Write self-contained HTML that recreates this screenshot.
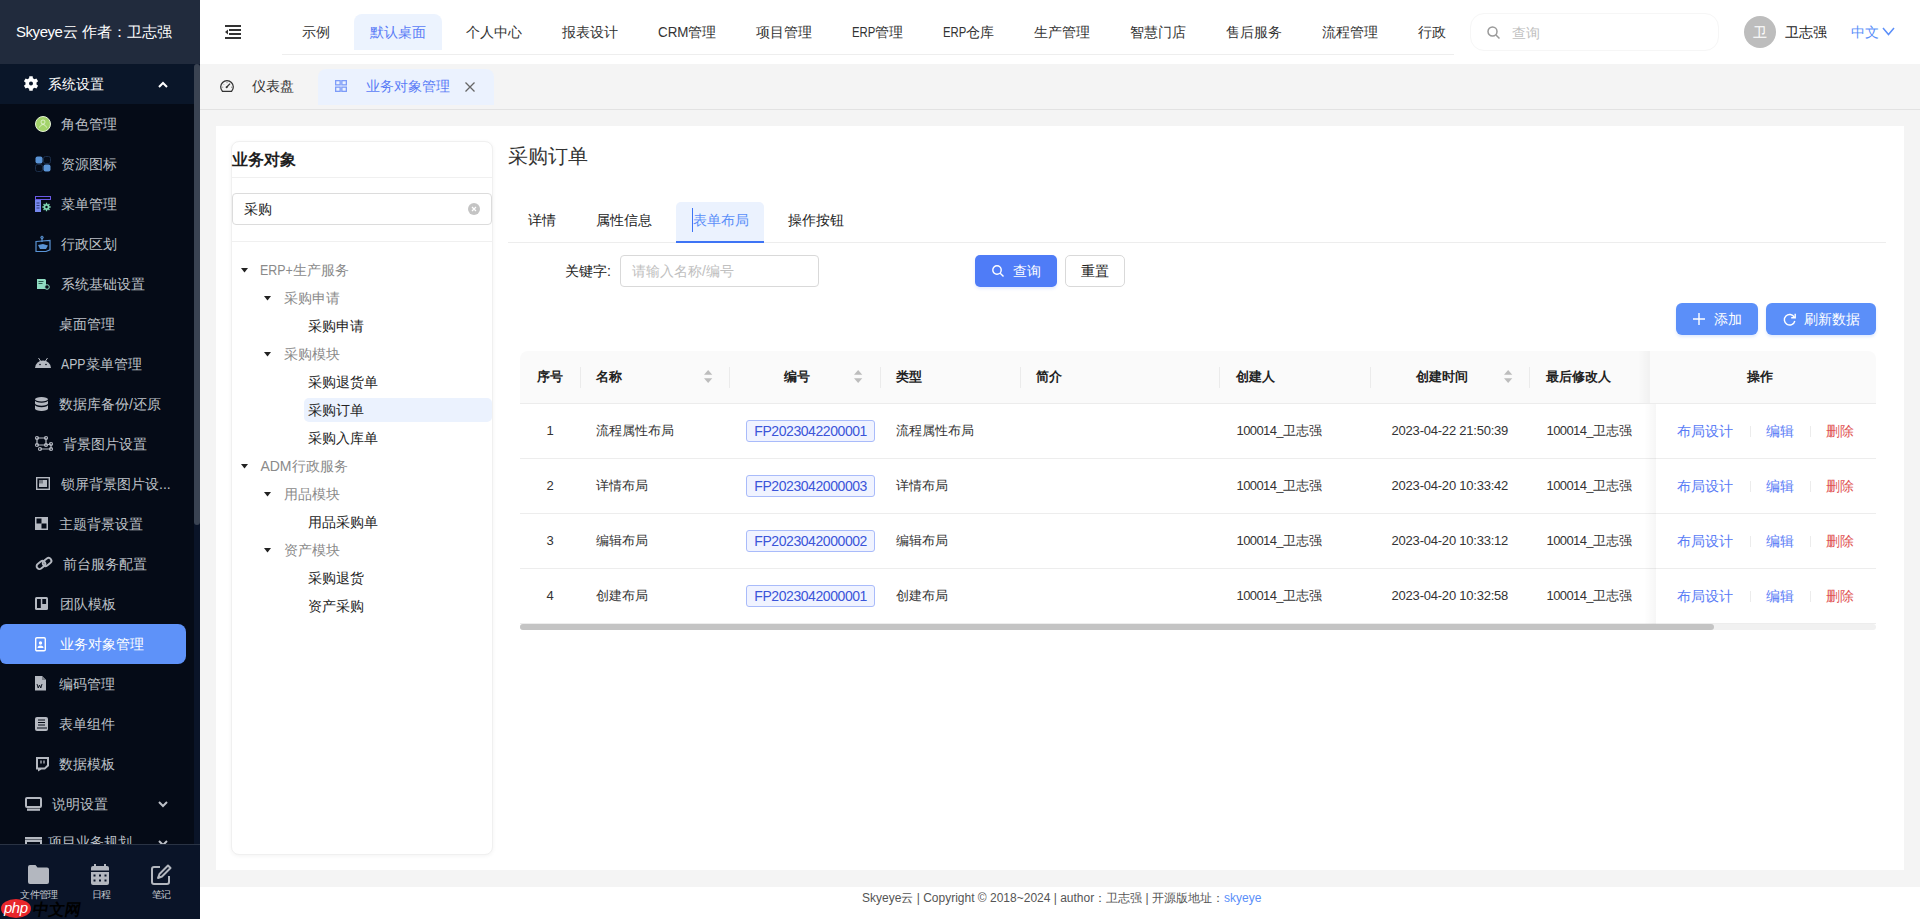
<!DOCTYPE html><html><head><meta charset="utf-8"><style>
*{box-sizing:border-box;margin:0;padding:0}
html,body{width:1920px;height:919px;overflow:hidden;background:#f4f4f4;font-family:"Liberation Sans",sans-serif;font-size:14px;color:#333}
.a{position:absolute}
.t{position:absolute;white-space:nowrap}
svg.i{position:absolute;display:block;overflow:visible}
</style></head><body>
<div class="a" style="left:0;top:0;width:200px;height:919px;background:#050b17;overflow:hidden">
<div class="a" style="left:0;top:0;width:200px;height:64px;background:#212b3d"></div>
<div class="t" style="left:16px;top:21.50px;line-height:20px;height:20px;font-size:15px;color:#fff;"><span style="letter-spacing:-.45px">Skyeye</span>云 作者：卫志强</div>
<div class="a" style="left:0;top:64px;width:200px;height:40px;background:#0a1629"></div>
<svg class="i" style="left:0;top:0" width="60" height="100" viewBox="0 0 60 100"><path fill="#fff" fill-rule="evenodd" d="M29.08 78.24 L29.34 76.29 L32.66 76.29 L32.92 78.24 L34.60 79.21 L36.41 78.45 L38.08 81.34 L36.51 82.53 L36.51 84.47 L38.08 85.66 L36.41 88.55 L34.60 87.79 L32.92 88.76 L32.66 90.71 L29.34 90.71 L29.08 88.76 L27.40 87.79 L25.59 88.55 L23.92 85.66 L25.49 84.47 L25.49 82.53 L23.92 81.34 L25.59 78.45 L27.40 79.21Z M33 83.5A2 2 0 1 0 29 83.5A2 2 0 1 0 33 83.5Z"/></svg>
<div class="t" style="left:48px;top:74.00px;line-height:20px;height:20px;font-size:14px;color:#fff;">系统设置</div>
<svg class="i" style="left:158px;top:81px" width="10" height="7" viewBox="0 0 10 7"><path d="M1 6L5 2l4 4" fill="none" stroke="#fff" stroke-width="2"/></svg>
<div class="t" style="left:61px;top:114.00px;line-height:20px;height:20px;font-size:14px;color:#bdc1c8;">角色管理</div>
<div class="t" style="left:61px;top:154.00px;line-height:20px;height:20px;font-size:14px;color:#bdc1c8;">资源图标</div>
<div class="t" style="left:61px;top:194.00px;line-height:20px;height:20px;font-size:14px;color:#bdc1c8;">菜单管理</div>
<div class="t" style="left:61px;top:234.00px;line-height:20px;height:20px;font-size:14px;color:#bdc1c8;">行政区划</div>
<div class="t" style="left:61px;top:274.00px;line-height:20px;height:20px;font-size:14px;color:#bdc1c8;">系统基础设置</div>
<div class="t" style="left:59px;top:314.00px;line-height:20px;height:20px;font-size:14px;color:#bdc1c8;">桌面管理</div>
<div class="t" style="left:61px;top:354.00px;line-height:20px;height:20px;font-size:14px;color:#bdc1c8;"><span style="display:inline-block;transform:scaleX(0.875);transform-origin:0 0;margin-right:-3.50px">APP</span>菜单管理</div>
<div class="t" style="left:59px;top:394.00px;line-height:20px;height:20px;font-size:14px;color:#bdc1c8;">数据库备份/还原</div>
<div class="t" style="left:63px;top:434.00px;line-height:20px;height:20px;font-size:14px;color:#bdc1c8;">背景图片设置</div>
<div class="t" style="left:61px;top:474.00px;line-height:20px;height:20px;font-size:14px;color:#bdc1c8;">锁屏背景图片设...</div>
<div class="t" style="left:59px;top:514.00px;line-height:20px;height:20px;font-size:14px;color:#bdc1c8;">主题背景设置</div>
<div class="t" style="left:63px;top:554.00px;line-height:20px;height:20px;font-size:14px;color:#bdc1c8;">前台服务配置</div>
<div class="t" style="left:59.5px;top:594.00px;line-height:20px;height:20px;font-size:14px;color:#bdc1c8;">团队模板</div>
<div class="a" style="left:0;top:624px;width:186px;height:40px;background:#5e92f9;border-radius:6px 8px 8px 6px"></div>
<div class="t" style="left:59.5px;top:634.00px;line-height:20px;height:20px;font-size:14px;color:#fff;">业务对象管理</div>
<div class="t" style="left:59px;top:674.00px;line-height:20px;height:20px;font-size:14px;color:#bdc1c8;">编码管理</div>
<div class="t" style="left:59px;top:714.00px;line-height:20px;height:20px;font-size:14px;color:#bdc1c8;">表单组件</div>
<div class="t" style="left:59px;top:754.00px;line-height:20px;height:20px;font-size:14px;color:#bdc1c8;">数据模板</div>
<svg class="i" style="left:35px;top:116px" width="16" height="16" viewBox="0 0 16 16"><circle cx="8" cy="8" r="7.5" fill="#a3d36a" stroke="#e6f3d6" stroke-width="1"/><circle cx="8" cy="6" r="2" fill="none" stroke="#e9f6dc" stroke-width=".8"/><path d="M4.5 11.5c.8-2 2-3 3.5-3s2.7 1 3.5 3" fill="none" stroke="#e9f6dc" stroke-width=".8"/></svg>
<svg class="i" style="left:35px;top:156px" width="16" height="16" viewBox="0 0 16 16"><rect x=".5" y=".5" width="7" height="7" rx="2" fill="#5a94d6"/><rect x="8.5" y="8.5" width="7" height="7" rx="2" fill="#5a94d6"/><rect x="8.5" y=".5" width="7" height="7" rx="2" fill="none" stroke="#1b2e4a"/><rect x=".5" y="8.5" width="7" height="7" rx="2" fill="none" stroke="#1b2e4a"/></svg>
<svg class="i" style="left:35px;top:196px" width="16" height="16" viewBox="0 0 16 16"><rect x=".5" y=".5" width="15" height="3" fill="none" stroke="#6a5ae6"/><rect x="0" y="4" width="6" height="12" fill="#7688ee"/><path d="M1.5 7h3M1.5 9.5h3M1.5 12h3" stroke="#1f2a5a" stroke-width=".8"/><path fill="#7fd6b4" fill-rule="evenodd" d="M14.41 10.27 L15.65 10.34 L15.65 11.66 L14.41 11.73 L14.07 12.55 L14.90 13.47 L13.97 14.40 L13.05 13.57 L12.23 13.91 L12.16 15.15 L10.84 15.15 L10.77 13.91 L9.95 13.57 L9.03 14.40 L8.10 13.47 L8.93 12.55 L8.59 11.73 L7.35 11.66 L7.35 10.34 L8.59 10.27 L8.93 9.45 L8.10 8.53 L9.03 7.60 L9.95 8.43 L10.77 8.09 L10.84 6.85 L12.16 6.85 L12.23 8.09 L13.05 8.43 L13.97 7.60 L14.90 8.53 L14.07 9.45Z M12.7 11A1.2 1.2 0 1 0 10.3 11A1.2 1.2 0 1 0 12.7 11Z"/></svg>
<svg class="i" style="left:35px;top:236px" width="16" height="16" viewBox="0 0 16 16"><path d="M1 5.5l14-1.2v9.5l-4 1.7H1z" fill="none" stroke="#5a94d6" stroke-width="1.2"/><path d="M3 9l5-1 5 1.5-2 3.5H5z" fill="#5a94d6"/><path d="M7 1v5" stroke="#5a94d6" stroke-width="1.2"/><circle cx="7" cy="1.5" r="1.3" fill="none" stroke="#5a94d6"/></svg>
<svg class="i" style="left:37px;top:279px" width="13" height="11" viewBox="0 0 13 11"><path d="M0 0h8l1 1v9H0z" fill="#8fdcc2"/><path d="M1.5 2.5h5M1.5 4.5h4" stroke="#0f3a30" stroke-width=".8"/><circle cx="10" cy="8" r="2.3" fill="#050b17" stroke="#8fdcc2" stroke-width="1"/></svg>
<svg class="i" style="left:35px;top:358px" width="16" height="10" viewBox="0 0 16 10"><path d="M0 10a8 7.5 0 0 1 16 0z" fill="#b5b9c1"/><path d="M3.5 0l2 3M12.5 0l-2 3" stroke="#b5b9c1" stroke-width="1"/><circle cx="5" cy="6.5" r=".8" fill="#050b17"/><circle cx="11" cy="6.5" r=".8" fill="#050b17"/></svg>
<svg class="i" style="left:35px;top:397px" width="13" height="14" viewBox="0 0 13 14"><ellipse cx="6.5" cy="2.2" rx="6.5" ry="2.2" fill="#b5b9c1"/><path d="M0 3.5v3a6.5 2.2 0 0 0 13 0v-3a6.5 2.2 0 0 1-13 0zM0 8v3.8a6.5 2.2 0 0 0 13 0V8a6.5 2.2 0 0 1-13 0z" fill="#b5b9c1"/></svg>
<svg class="i" style="left:35px;top:436px" width="18" height="15" viewBox="0 0 18 15"><g fill="none" stroke="#b5b9c1" stroke-width="1.2"><path d="M2 2h9M2 2v7M11 2v7M2 9h9M5 13h11M16 13v-5M11 9l5-1"/><circle cx="2" cy="2" r="1.5"/><circle cx="11" cy="2" r="1.5"/><circle cx="2" cy="9" r="1.5"/><circle cx="11" cy="9" r="1.5"/><circle cx="5" cy="13" r="1.5"/><circle cx="16" cy="13" r="1.5"/><circle cx="16" cy="8" r="1.5"/></g></svg>
<svg class="i" style="left:36px;top:477px" width="14" height="13" viewBox="0 0 14 13"><rect x=".7" y=".7" width="12.6" height="11.6" fill="none" stroke="#b5b9c1" stroke-width="1.4"/><rect x="3" y="3" width="8" height="7" fill="#b5b9c1"/><path d="M3 3h4v3.5H3z" fill="#050b17" opacity=".35"/></svg>
<svg class="i" style="left:35px;top:517px" width="13" height="13" viewBox="0 0 13 13"><rect width="13" height="13" fill="#b5b9c1"/><rect x="1.5" y="1.5" width="5" height="5" fill="#050b17"/><rect x="6.5" y="6.5" width="5" height="5" fill="#050b17"/></svg>
<svg class="i" style="left:35px;top:557px" width="18" height="13" viewBox="0 0 18 13"><g fill="none" stroke="#b5b9c1" stroke-width="1.9"><rect x="1.2" y="5.2" width="9.5" height="5.6" rx="2.8" transform="rotate(-38 5.95 8)"/><rect x="7.3" y="2.2" width="9.5" height="5.6" rx="2.8" transform="rotate(-38 12.05 5)"/></g></svg>
<svg class="i" style="left:35px;top:597px" width="13" height="13" viewBox="0 0 13 13"><rect width="13" height="13" rx="1.5" fill="#b5b9c1"/><rect x="2" y="2" width="3.8" height="9" fill="#050b17"/><rect x="7.3" y="2" width="3.8" height="5" fill="#050b17"/></svg>
<svg class="i" style="left:35px;top:636.5px" width="11" height="14.5" viewBox="0 0 11 14.5"><rect x=".7" y=".7" width="9.6" height="13.1" rx="1.2" fill="none" stroke="#fff" stroke-width="1.4"/><circle cx="5.5" cy="6" r="1.7" fill="#fff"/><path d="M2.5 11a3 2.5 0 0 1 6 0z" fill="#fff"/></svg>
<svg class="i" style="left:35px;top:676px" width="11" height="14.5" viewBox="0 0 11 14.5"><path d="M0 0h7l4 4v10.5H0z" fill="#b5b9c1"/><path d="M7 0v4h4" fill="#7a7e86"/><path d="M2 8l1.2 4 1.3-3 1.3 3L7 8" fill="none" stroke="#050b17" stroke-width=".9"/></svg>
<svg class="i" style="left:35px;top:716.5px" width="13" height="14" viewBox="0 0 13 14"><rect width="13" height="14" rx="2" fill="#b5b9c1"/><path d="M3 3h7M3 5.5h7M3 8h7" stroke="#050b17" stroke-width="1"/><path d="M2 11h10" stroke="#050b17" stroke-width="1"/></svg>
<svg class="i" style="left:35px;top:756.5px" width="14" height="14.5" viewBox="0 0 14 14.5"><path d="M1 0h13v9l-4 3.5H6.5L3 14.5v-2H1z" fill="#b5b9c1"/><path d="M3 2h9v6l-2.5 2.5H3z" fill="#050b17"/><path d="M6 3.5v3M9 3.5v3" stroke="#b5b9c1" stroke-width="1.3"/></svg>
<svg class="i" style="left:25px;top:797px" width="17" height="14" viewBox="0 0 17 14"><rect x="1" y="1" width="15" height="9" rx="1" fill="none" stroke="#b5b9c1" stroke-width="2"/><rect x="2" y="11.5" width="13" height="2.3" fill="#b5b9c1"/></svg>
<svg class="i" style="left:25px;top:837px" width="17" height="10" viewBox="0 0 17 10"><rect x="0" y="0" width="17" height="2.5" fill="#b5b9c1"/><rect x="1" y="4" width="15" height="6" fill="none" stroke="#b5b9c1" stroke-width="2"/></svg>
<div class="t" style="left:52px;top:794.00px;line-height:20px;height:20px;font-size:14px;color:#bdc1c8;">说明设置</div>
<div class="t" style="left:48px;top:832.00px;line-height:20px;height:20px;font-size:14px;color:#bdc1c8;">项目业务规划</div>
<svg class="i" style="left:158px;top:801px" width="10" height="7" viewBox="0 0 10 7"><path d="M1 1l4 4 4-4" fill="none" stroke="#bdc1c8" stroke-width="2"/></svg>
<svg class="i" style="left:158px;top:840px" width="10" height="7" viewBox="0 0 10 7"><path d="M1 1l4 4 4-4" fill="none" stroke="#bdc1c8" stroke-width="2"/></svg>
<div class="a" style="left:194px;top:64px;width:6px;height:780px;background:#0a1428"></div>
<div class="a" style="left:194px;top:64px;width:6px;height:461px;background:#3a4352;border-radius:3px"></div>
<div class="a" style="left:0;top:844px;width:200px;height:75px;background:#0a1428;border-top:1px solid #2a3344"></div>
<svg class="i" style="left:28px;top:865px" width="21" height="19" viewBox="0 0 21 19"><path d="M0 2a2 2 0 0 1 2-2h5.5l2 2.5H19a2 2 0 0 1 2 2V17a2 2 0 0 1-2 2H2a2 2 0 0 1-2-2z" fill="#b3b7bf"/></svg>
<svg class="i" style="left:91px;top:864px" width="18" height="21" viewBox="0 0 18 21"><path d="M4 0v3M14 0v3" stroke="#b3b7bf" stroke-width="2"/><path d="M0 4a2 2 0 0 1 2-2h14a2 2 0 0 1 2 2v2.5H0z" fill="#b3b7bf"/><path d="M0 8h18v11a2 2 0 0 1-2 2H2a2 2 0 0 1-2-2z" fill="#b3b7bf"/><g fill="#0a1428"><rect x="2.5" y="10.5" width="2" height="2"/><rect x="8" y="10.5" width="2" height="2"/><rect x="13.5" y="10.5" width="2" height="2"/><rect x="2.5" y="15.5" width="2" height="2"/><rect x="8" y="15.5" width="2" height="2"/><rect x="13.5" y="15.5" width="2" height="2"/></g></svg>
<svg class="i" style="left:151px;top:864px" width="21" height="21" viewBox="0 0 21 21"><path d="M9 3H3a2 2 0 0 0-2 2v13a2 2 0 0 0 2 2h13a2 2 0 0 0 2-2v-6" fill="none" stroke="#b3b7bf" stroke-width="2"/><path d="M17 1.5l2.5 2.5L11 12.5l-4 1.5 1.5-4z" fill="none" stroke="#b3b7bf" stroke-width="2" stroke-linejoin="round"/></svg>
<div class="t" style="left:20.3px;top:884.70px;line-height:20px;height:20px;font-size:10px;color:#c5c9d0;letter-spacing:-.7px">文件管理</div>
<div class="t" style="left:91.7px;top:884.70px;line-height:20px;height:20px;font-size:10px;color:#c5c9d0;letter-spacing:-1px">日程</div>
<div class="t" style="left:152px;top:884.70px;line-height:20px;height:20px;font-size:10px;color:#c5c9d0;letter-spacing:-1px">笔记</div>
<div class="a" style="left:1px;top:899px;width:30px;height:19px;border-radius:50%;background:#e8262b"></div>
<div class="t" style="left:4px;top:899px;line-height:17px;font-size:15px;color:#fff;font-style:italic;letter-spacing:-.5px">php</div>
<div class="t" style="left:33px;top:899px;line-height:20px;font-size:16px;color:#000;font-weight:bold;transform:skewX(-10deg);top:900px;">中文网</div>
</div>
<div class="a" style="left:200px;top:0;width:1720px;height:64px;background:#fff"></div>
<svg class="i" style="left:225px;top:25px" width="16" height="14" viewBox="0 0 16 14"><path d="M0 1h16M4 5h12M4 9h12M0 13h16" stroke="#333" stroke-width="2"/><path d="M0 7l3-2.5v5z" fill="#333"/></svg>
<div class="a" style="left:282px;top:54px;width:1172px;height:1px;background:#eeeeee"></div>
<div class="a" style="left:354px;top:14px;width:88px;height:36px;background:#ecf3fe;border-radius:8px 8px 0 0"></div>
<div class="t" style="left:302px;top:22.00px;line-height:20px;height:20px;font-size:14px;color:#333;">示例</div>
<div class="t" style="left:370px;top:22.00px;line-height:20px;height:20px;font-size:14px;color:#5a7cf6;">默认桌面</div>
<div class="t" style="left:466px;top:22.00px;line-height:20px;height:20px;font-size:14px;color:#333;">个人中心</div>
<div class="t" style="left:562px;top:22.00px;line-height:20px;height:20px;font-size:14px;color:#333;">报表设计</div>
<div class="t" style="left:658px;top:22.00px;line-height:20px;height:20px;font-size:14px;color:#333;"><span style="display:inline-block;transform:scaleX(0.955);transform-origin:0 0;margin-right:-1.43px">CRM</span>管理</div>
<div class="t" style="left:756px;top:22.00px;line-height:20px;height:20px;font-size:14px;color:#333;">项目管理</div>
<div class="t" style="left:852px;top:22.00px;line-height:20px;height:20px;font-size:14px;color:#333;"><span style="display:inline-block;transform:scaleX(0.81);transform-origin:0 0;margin-right:-5.47px">ERP</span>管理</div>
<div class="t" style="left:943px;top:22.00px;line-height:20px;height:20px;font-size:14px;color:#333;"><span style="display:inline-block;transform:scaleX(0.81);transform-origin:0 0;margin-right:-5.47px">ERP</span>仓库</div>
<div class="t" style="left:1034px;top:22.00px;line-height:20px;height:20px;font-size:14px;color:#333;">生产管理</div>
<div class="t" style="left:1130px;top:22.00px;line-height:20px;height:20px;font-size:14px;color:#333;">智慧门店</div>
<div class="t" style="left:1226px;top:22.00px;line-height:20px;height:20px;font-size:14px;color:#333;">售后服务</div>
<div class="t" style="left:1322px;top:22.00px;line-height:20px;height:20px;font-size:14px;color:#333;">流程管理</div>
<div class="t" style="left:1418px;top:22.00px;line-height:20px;height:20px;font-size:14px;color:#333;">行政</div>
<div class="a" style="left:1470px;top:13px;width:249px;height:38px;border:1px solid #f6f6f6;border-radius:14px"></div>
<svg class="i" style="left:1487px;top:26px" width="13" height="13" viewBox="0 0 13 13"><circle cx="5.5" cy="5.5" r="4.5" fill="none" stroke="#999" stroke-width="1.5"/><path d="M9 9l3.5 3.5" stroke="#999" stroke-width="1.5"/></svg>
<div class="t" style="left:1512px;top:23.00px;line-height:20px;height:20px;font-size:14px;color:#c0c0c0;">查询</div>
<div class="a" style="left:1744px;top:16px;width:32px;height:32px;border-radius:50%;background:#bdbdbd"></div>
<div class="t" style="left:1753px;top:22.00px;line-height:20px;height:20px;font-size:14px;color:#fff;">卫</div>
<div class="t" style="left:1785px;top:22.00px;line-height:20px;height:20px;font-size:14px;color:#222;">卫志强</div>
<div class="t" style="left:1851px;top:22.00px;line-height:20px;height:20px;font-size:14px;color:#5b8ff9;">中文</div>
<svg class="i" style="left:1882px;top:27px" width="13" height="9" viewBox="0 0 13 9"><path d="M1 1l5.5 6.5L12 1" fill="none" stroke="#5b8ff9" stroke-width="1.5"/></svg>
<div class="a" style="left:200px;top:64px;width:1720px;height:46px;background:#f4f4f4;border-bottom:1px solid #e2e2e2"></div>
<svg class="i" style="left:220px;top:80px" width="14" height="12" viewBox="0 0 14 12"><path d="M2.4 11.3A6.3 6.3 0 1 1 11.6 11.3z" fill="none" stroke="#333" stroke-width="1.25" stroke-linejoin="round"/><path d="M6.6 7.2L10 3.6" stroke="#333" stroke-width="1.3"/><circle cx="6.6" cy="7.2" r="1" fill="#333"/><path d="M7 2.2v.9M3.3 3.9l.6.6M2.3 7.2h.9M11 7.2h.9" stroke="#555" stroke-width=".8"/></svg>
<div class="t" style="left:252px;top:76.00px;line-height:20px;height:20px;font-size:14px;color:#333;">仪表盘</div>
<div class="a" style="left:318px;top:69px;width:176px;height:36px;background:#ebf2fe;border-radius:8px 8px 0 0"></div>
<svg class="i" style="left:335px;top:80px" width="12" height="12" viewBox="0 0 12 12"><g fill="none" stroke="#7d9cf8" stroke-width="1.3"><rect x=".65" y=".65" width="4.5" height="4.2"/><rect x="6.85" y=".65" width="4.5" height="4.2"/><rect x=".65" y="7.15" width="4.5" height="4.2"/><rect x="6.85" y="7.15" width="4.5" height="4.2"/></g></svg>
<div class="t" style="left:366px;top:76.00px;line-height:20px;height:20px;font-size:14px;color:#5a7cf6;">业务对象管理</div>
<svg class="i" style="left:465px;top:82px" width="10" height="10" viewBox="0 0 10 10"><path d="M.5 .5l9 9M9.5 .5l-9 9" stroke="#666" stroke-width="1.3"/></svg>
<div class="a" style="left:216px;top:126px;width:1688px;height:744px;background:#fff"></div>
<div class="a" style="left:231px;top:141px;width:262px;height:714px;background:#fff;border:1px solid #f0f0f0;border-radius:8px;box-shadow:0 1px 4px rgba(0,0,0,.05)"></div>
<div class="t" style="left:232px;top:150.00px;line-height:20px;height:20px;font-size:16px;color:#1f1f1f;font-weight:bold;">业务对象</div>
<div class="a" style="left:232px;top:177px;width:260px;height:1px;background:#f0f0f0"></div>
<div class="a" style="left:232px;top:193px;width:260px;height:32px;border:1px solid #dcdcdc;border-radius:4px"></div>
<div class="t" style="left:244px;top:199.00px;line-height:20px;height:20px;font-size:14px;color:#222;">采购</div>
<svg class="i" style="left:468px;top:203px" width="12" height="12" viewBox="0 0 12 12"><circle cx="6" cy="6" r="6" fill="#c4c4c4"/><path d="M4 4l4 4M8 4l-4 4" stroke="#fff" stroke-width="1.2"/></svg>
<div class="a" style="left:232px;top:241px;width:260px;height:1px;background:#f0f0f0"></div>
<div class="a" style="left:304px;top:398px;width:188px;height:24px;background:#ebf2fe;border-radius:5px"></div>
<svg class="i" style="left:240.5px;top:267.7px" width="7" height="5" viewBox="0 0 7 5"><path d="M0 0h7L3.5 4.5z" fill="#222"/></svg>
<div class="t" style="left:260.4px;top:260.00px;line-height:20px;height:20px;font-size:14px;color:#8a8a8a;"><span style="display:inline-block;transform:scaleX(0.89);transform-origin:0 0;margin-right:-4.07px">ERP+</span>生产服务</div>
<svg class="i" style="left:264.3px;top:295.7px" width="7" height="5" viewBox="0 0 7 5"><path d="M0 0h7L3.5 4.5z" fill="#222"/></svg>
<div class="t" style="left:284px;top:288.00px;line-height:20px;height:20px;font-size:14px;color:#8a8a8a;">采购申请</div>
<div class="t" style="left:307.8px;top:316.00px;line-height:20px;height:20px;font-size:14px;color:#222;">采购申请</div>
<svg class="i" style="left:264.3px;top:351.7px" width="7" height="5" viewBox="0 0 7 5"><path d="M0 0h7L3.5 4.5z" fill="#222"/></svg>
<div class="t" style="left:284px;top:344.00px;line-height:20px;height:20px;font-size:14px;color:#8a8a8a;">采购模块</div>
<div class="t" style="left:307.8px;top:372.00px;line-height:20px;height:20px;font-size:14px;color:#222;">采购退货单</div>
<div class="t" style="left:307.8px;top:400.00px;line-height:20px;height:20px;font-size:14px;color:#222;">采购订单</div>
<div class="t" style="left:307.8px;top:428.00px;line-height:20px;height:20px;font-size:14px;color:#222;">采购入库单</div>
<svg class="i" style="left:240.5px;top:463.7px" width="7" height="5" viewBox="0 0 7 5"><path d="M0 0h7L3.5 4.5z" fill="#222"/></svg>
<div class="t" style="left:260.4px;top:456.00px;line-height:20px;height:20px;font-size:14px;color:#8a8a8a;">ADM行政服务</div>
<svg class="i" style="left:264.3px;top:491.7px" width="7" height="5" viewBox="0 0 7 5"><path d="M0 0h7L3.5 4.5z" fill="#222"/></svg>
<div class="t" style="left:284px;top:484.00px;line-height:20px;height:20px;font-size:14px;color:#8a8a8a;">用品模块</div>
<div class="t" style="left:307.8px;top:512.00px;line-height:20px;height:20px;font-size:14px;color:#222;">用品采购单</div>
<svg class="i" style="left:264.3px;top:547.7px" width="7" height="5" viewBox="0 0 7 5"><path d="M0 0h7L3.5 4.5z" fill="#222"/></svg>
<div class="t" style="left:284px;top:540.00px;line-height:20px;height:20px;font-size:14px;color:#8a8a8a;">资产模块</div>
<div class="t" style="left:307.8px;top:568.00px;line-height:20px;height:20px;font-size:14px;color:#222;">采购退货</div>
<div class="t" style="left:307.8px;top:596.00px;line-height:20px;height:20px;font-size:14px;color:#222;">资产采购</div>
<div class="t" style="left:508px;top:143.00px;line-height:26px;height:26px;font-size:20px;color:#333;">采购订单</div>
<div class="a" style="left:508px;top:242px;width:1378px;height:1px;background:#ededed"></div>
<div class="a" style="left:676px;top:202px;width:88px;height:39px;background:#ebf2fe;border-radius:5px 5px 0 0"></div>
<div class="a" style="left:676px;top:241px;width:88px;height:2px;background:#3e74f5"></div>
<div class="t" style="left:528px;top:210.00px;line-height:20px;height:20px;font-size:14px;color:#222;">详情</div>
<div class="t" style="left:596px;top:210.00px;line-height:20px;height:20px;font-size:14px;color:#222;">属性信息</div>
<div class="t" style="left:693px;top:210.00px;line-height:20px;height:20px;font-size:14px;color:#5b8ff9;">表单布局</div>
<div class="t" style="left:788px;top:210.00px;line-height:20px;height:20px;font-size:14px;color:#222;">操作按钮</div>
<div class="a" style="left:692px;top:208px;width:1px;height:24px;background:#3e74f5"></div>
<div class="t" style="left:565px;top:261.00px;line-height:20px;height:20px;font-size:14px;color:#222;">关键字:</div>
<div class="a" style="left:620px;top:255px;width:199px;height:32px;border:1px solid #d9d9d9;border-radius:4px"></div>
<div class="t" style="left:632px;top:261.00px;line-height:20px;height:20px;font-size:14px;color:#c0c0c0;">请输入名称/编号</div>
<div class="a" style="left:975px;top:255px;width:82px;height:32px;background:#4f7cf7;border-radius:5px;box-shadow:0 2px 3px rgba(79,124,247,.15)"></div>
<svg class="i" style="left:992px;top:265px" width="12" height="12" viewBox="0 0 12 12"><circle cx="5" cy="5" r="4.2" fill="none" stroke="#fff" stroke-width="1.4"/><path d="M8.2 8.2l3.3 3.3" stroke="#fff" stroke-width="1.4"/></svg>
<div class="t" style="left:1013px;top:261.00px;line-height:20px;height:20px;font-size:14px;color:#fff;">查询</div>
<div class="a" style="left:1065px;top:255px;width:60px;height:32px;border:1px solid #d9d9d9;border-radius:5px"></div>
<div class="t" style="left:1081px;top:261.00px;line-height:20px;height:20px;font-size:14px;color:#222;">重置</div>
<div class="a" style="left:1676px;top:303px;width:82px;height:32px;background:#5b8ff9;border-radius:6px;box-shadow:0 2px 3px rgba(91,143,249,.18)"></div>
<svg class="i" style="left:1693px;top:313px" width="12" height="12" viewBox="0 0 12 12"><path d="M6 0v12M0 6h12" stroke="#fff" stroke-width="1.4"/></svg>
<div class="t" style="left:1714px;top:309.00px;line-height:20px;height:20px;font-size:14px;color:#fff;">添加</div>
<div class="a" style="left:1766px;top:303px;width:110px;height:32px;background:#5b8ff9;border-radius:6px;box-shadow:0 2px 3px rgba(91,143,249,.18)"></div>
<svg class="i" style="left:1782.5px;top:312.5px" width="13" height="13" viewBox="0 0 13 13"><path d="M11.3 4.2A5.3 5.3 0 1 0 11.8 8" fill="none" stroke="#fff" stroke-width="1.4"/><path d="M12.2 0.8v4h-4" fill="none" stroke="#fff" stroke-width="1.4"/></svg>
<div class="t" style="left:1804px;top:309.00px;line-height:20px;height:20px;font-size:14px;color:#fff;">刷新数据</div>
<div class="a" style="left:520px;top:351px;width:1356px;height:53px;background:#fafafa;border-radius:8px 8px 0 0;border-bottom:1px solid #ececec"></div>
<div class="a" style="left:580px;top:367px;width:1px;height:21px;background:#ebebeb"></div>
<div class="a" style="left:729px;top:367px;width:1px;height:21px;background:#ebebeb"></div>
<div class="a" style="left:880px;top:367px;width:1px;height:21px;background:#ebebeb"></div>
<div class="a" style="left:1020px;top:367px;width:1px;height:21px;background:#ebebeb"></div>
<div class="a" style="left:1219px;top:367px;width:1px;height:21px;background:#ebebeb"></div>
<div class="a" style="left:1370px;top:367px;width:1px;height:21px;background:#ebebeb"></div>
<div class="a" style="left:1529px;top:367px;width:1px;height:21px;background:#ebebeb"></div>
<div class="t" style="left:537px;top:367.00px;line-height:20px;height:20px;font-size:13px;color:#222;font-weight:bold;">序号</div>
<div class="t" style="left:596px;top:367.00px;line-height:20px;height:20px;font-size:13px;color:#222;font-weight:bold;">名称</div>
<div class="t" style="left:783.5px;top:367.00px;line-height:20px;height:20px;font-size:13px;color:#222;font-weight:bold;">编号</div>
<div class="t" style="left:896px;top:367.00px;line-height:20px;height:20px;font-size:13px;color:#222;font-weight:bold;">类型</div>
<div class="t" style="left:1036px;top:367.00px;line-height:20px;height:20px;font-size:13px;color:#222;font-weight:bold;">简介</div>
<div class="t" style="left:1236px;top:367.00px;line-height:20px;height:20px;font-size:13px;color:#222;font-weight:bold;">创建人</div>
<div class="t" style="left:1415.5px;top:367.00px;line-height:20px;height:20px;font-size:13px;color:#222;font-weight:bold;">创建时间</div>
<div class="t" style="left:1545.6px;top:367.00px;line-height:20px;height:20px;font-size:13px;color:#222;font-weight:bold;">最后修改人</div>
<div class="t" style="left:1747.3px;top:367.00px;line-height:20px;height:20px;font-size:13px;color:#222;font-weight:bold;">操作</div>
<svg class="i" style="left:703.8px;top:370.4px" width="8.3" height="13" viewBox="0 0 8.3 13"><path d="M4.15 0L8.3 4.8H0z M4.15 13L0 8.2h8.3z" fill="#bdbdbd"/></svg>
<svg class="i" style="left:854.0px;top:370.4px" width="8.3" height="13" viewBox="0 0 8.3 13"><path d="M4.15 0L8.3 4.8H0z M4.15 13L0 8.2h8.3z" fill="#bdbdbd"/></svg>
<svg class="i" style="left:1503.5px;top:370.4px" width="8.3" height="13" viewBox="0 0 8.3 13"><path d="M4.15 0L8.3 4.8H0z M4.15 13L0 8.2h8.3z" fill="#bdbdbd"/></svg>
<div class="a" style="left:520px;top:458px;width:1356px;height:1px;background:#ededed"></div>
<div class="t" style="left:546.5px;top:421.00px;line-height:20px;height:20px;font-size:13px;color:#333;">1</div>
<div class="t" style="left:596px;top:421.00px;line-height:20px;height:20px;font-size:13px;color:#333;">流程属性布局</div>
<div class="a" style="left:746px;top:420px;width:129px;height:22px;background:#f0f3ff;border:1px solid #a9bbfa;border-radius:3px"></div>
<div class="t" style="left:754.3px;top:421.00px;line-height:20px;height:20px;font-size:14px;color:#3b55d9;letter-spacing:-.43px">FP2023042200001</div>
<div class="t" style="left:896px;top:421.00px;line-height:20px;height:20px;font-size:13px;color:#333;">流程属性布局</div>
<div class="t" style="left:1236.6px;top:421.00px;line-height:20px;height:20px;font-size:13px;color:#333;"><span style="letter-spacing:-.6px">100014_</span>卫志强</div>
<div class="t" style="left:1391.6px;top:421.00px;line-height:20px;height:20px;font-size:13px;color:#333;letter-spacing:-.22px">2023-04-22 21:50:39</div>
<div class="t" style="left:1546.6px;top:421.00px;line-height:20px;height:20px;font-size:13px;color:#333;"><span style="letter-spacing:-.6px">100014_</span>卫志强</div>
<div class="t" style="left:1677px;top:421.00px;line-height:20px;height:20px;font-size:14px;color:#5a7cf6;">布局设计</div>
<div class="a" style="left:1749.5px;top:426px;width:1px;height:11px;background:#ececec"></div>
<div class="t" style="left:1766px;top:421.00px;line-height:20px;height:20px;font-size:14px;color:#5a7cf6;">编辑</div>
<div class="a" style="left:1810px;top:426px;width:1px;height:11px;background:#ececec"></div>
<div class="t" style="left:1826.3px;top:421.00px;line-height:20px;height:20px;font-size:14px;color:#e05252;">删除</div>
<div class="a" style="left:520px;top:513px;width:1356px;height:1px;background:#ededed"></div>
<div class="t" style="left:546.5px;top:476.00px;line-height:20px;height:20px;font-size:13px;color:#333;">2</div>
<div class="t" style="left:596px;top:476.00px;line-height:20px;height:20px;font-size:13px;color:#333;">详情布局</div>
<div class="a" style="left:746px;top:475px;width:129px;height:22px;background:#f0f3ff;border:1px solid #a9bbfa;border-radius:3px"></div>
<div class="t" style="left:754.3px;top:476.00px;line-height:20px;height:20px;font-size:14px;color:#3b55d9;letter-spacing:-.43px">FP2023042000003</div>
<div class="t" style="left:896px;top:476.00px;line-height:20px;height:20px;font-size:13px;color:#333;">详情布局</div>
<div class="t" style="left:1236.6px;top:476.00px;line-height:20px;height:20px;font-size:13px;color:#333;"><span style="letter-spacing:-.6px">100014_</span>卫志强</div>
<div class="t" style="left:1391.6px;top:476.00px;line-height:20px;height:20px;font-size:13px;color:#333;letter-spacing:-.22px">2023-04-20 10:33:42</div>
<div class="t" style="left:1546.6px;top:476.00px;line-height:20px;height:20px;font-size:13px;color:#333;"><span style="letter-spacing:-.6px">100014_</span>卫志强</div>
<div class="t" style="left:1677px;top:476.00px;line-height:20px;height:20px;font-size:14px;color:#5a7cf6;">布局设计</div>
<div class="a" style="left:1749.5px;top:481px;width:1px;height:11px;background:#ececec"></div>
<div class="t" style="left:1766px;top:476.00px;line-height:20px;height:20px;font-size:14px;color:#5a7cf6;">编辑</div>
<div class="a" style="left:1810px;top:481px;width:1px;height:11px;background:#ececec"></div>
<div class="t" style="left:1826.3px;top:476.00px;line-height:20px;height:20px;font-size:14px;color:#e05252;">删除</div>
<div class="a" style="left:520px;top:568px;width:1356px;height:1px;background:#ededed"></div>
<div class="t" style="left:546.5px;top:531.00px;line-height:20px;height:20px;font-size:13px;color:#333;">3</div>
<div class="t" style="left:596px;top:531.00px;line-height:20px;height:20px;font-size:13px;color:#333;">编辑布局</div>
<div class="a" style="left:746px;top:530px;width:129px;height:22px;background:#f0f3ff;border:1px solid #a9bbfa;border-radius:3px"></div>
<div class="t" style="left:754.3px;top:531.00px;line-height:20px;height:20px;font-size:14px;color:#3b55d9;letter-spacing:-.43px">FP2023042000002</div>
<div class="t" style="left:896px;top:531.00px;line-height:20px;height:20px;font-size:13px;color:#333;">编辑布局</div>
<div class="t" style="left:1236.6px;top:531.00px;line-height:20px;height:20px;font-size:13px;color:#333;"><span style="letter-spacing:-.6px">100014_</span>卫志强</div>
<div class="t" style="left:1391.6px;top:531.00px;line-height:20px;height:20px;font-size:13px;color:#333;letter-spacing:-.22px">2023-04-20 10:33:12</div>
<div class="t" style="left:1546.6px;top:531.00px;line-height:20px;height:20px;font-size:13px;color:#333;"><span style="letter-spacing:-.6px">100014_</span>卫志强</div>
<div class="t" style="left:1677px;top:531.00px;line-height:20px;height:20px;font-size:14px;color:#5a7cf6;">布局设计</div>
<div class="a" style="left:1749.5px;top:536px;width:1px;height:11px;background:#ececec"></div>
<div class="t" style="left:1766px;top:531.00px;line-height:20px;height:20px;font-size:14px;color:#5a7cf6;">编辑</div>
<div class="a" style="left:1810px;top:536px;width:1px;height:11px;background:#ececec"></div>
<div class="t" style="left:1826.3px;top:531.00px;line-height:20px;height:20px;font-size:14px;color:#e05252;">删除</div>
<div class="a" style="left:520px;top:623px;width:1356px;height:1px;background:#ededed"></div>
<div class="t" style="left:546.5px;top:586.00px;line-height:20px;height:20px;font-size:13px;color:#333;">4</div>
<div class="t" style="left:596px;top:586.00px;line-height:20px;height:20px;font-size:13px;color:#333;">创建布局</div>
<div class="a" style="left:746px;top:585px;width:129px;height:22px;background:#f0f3ff;border:1px solid #a9bbfa;border-radius:3px"></div>
<div class="t" style="left:754.3px;top:586.00px;line-height:20px;height:20px;font-size:14px;color:#3b55d9;letter-spacing:-.43px">FP2023042000001</div>
<div class="t" style="left:896px;top:586.00px;line-height:20px;height:20px;font-size:13px;color:#333;">创建布局</div>
<div class="t" style="left:1236.6px;top:586.00px;line-height:20px;height:20px;font-size:13px;color:#333;"><span style="letter-spacing:-.6px">100014_</span>卫志强</div>
<div class="t" style="left:1391.6px;top:586.00px;line-height:20px;height:20px;font-size:13px;color:#333;letter-spacing:-.22px">2023-04-20 10:32:58</div>
<div class="t" style="left:1546.6px;top:586.00px;line-height:20px;height:20px;font-size:13px;color:#333;"><span style="letter-spacing:-.6px">100014_</span>卫志强</div>
<div class="t" style="left:1677px;top:586.00px;line-height:20px;height:20px;font-size:14px;color:#5a7cf6;">布局设计</div>
<div class="a" style="left:1749.5px;top:591px;width:1px;height:11px;background:#ececec"></div>
<div class="t" style="left:1766px;top:586.00px;line-height:20px;height:20px;font-size:14px;color:#5a7cf6;">编辑</div>
<div class="a" style="left:1810px;top:591px;width:1px;height:11px;background:#ececec"></div>
<div class="t" style="left:1826.3px;top:586.00px;line-height:20px;height:20px;font-size:14px;color:#e05252;">删除</div>
<div class="a" style="left:1638px;top:351px;width:12px;height:52px;background:linear-gradient(to right,rgba(0,0,0,0),rgba(0,0,0,.035))"></div>
<div class="a" style="left:1644px;top:404px;width:12px;height:220px;background:linear-gradient(to right,rgba(0,0,0,0),rgba(0,0,0,.035))"></div>
<div class="a" style="left:520px;top:624px;width:1356px;height:6px;background:#f1f1f1;border-radius:3px"></div>
<div class="a" style="left:520px;top:624px;width:1194px;height:6px;background:#c4c4c4;border-radius:3px"></div>
<div class="a" style="left:200px;top:887px;width:1720px;height:32px;background:#fff"></div>
<div class="t" style="left:862px;top:888.00px;line-height:20px;height:20px;font-size:12px;color:#555;">Skyeye云 | Copyright © 2018~2024 | author：卫志强 | 开源版地址：<span style="color:#5b8ff9">skyeye</span></div>
</body></html>
